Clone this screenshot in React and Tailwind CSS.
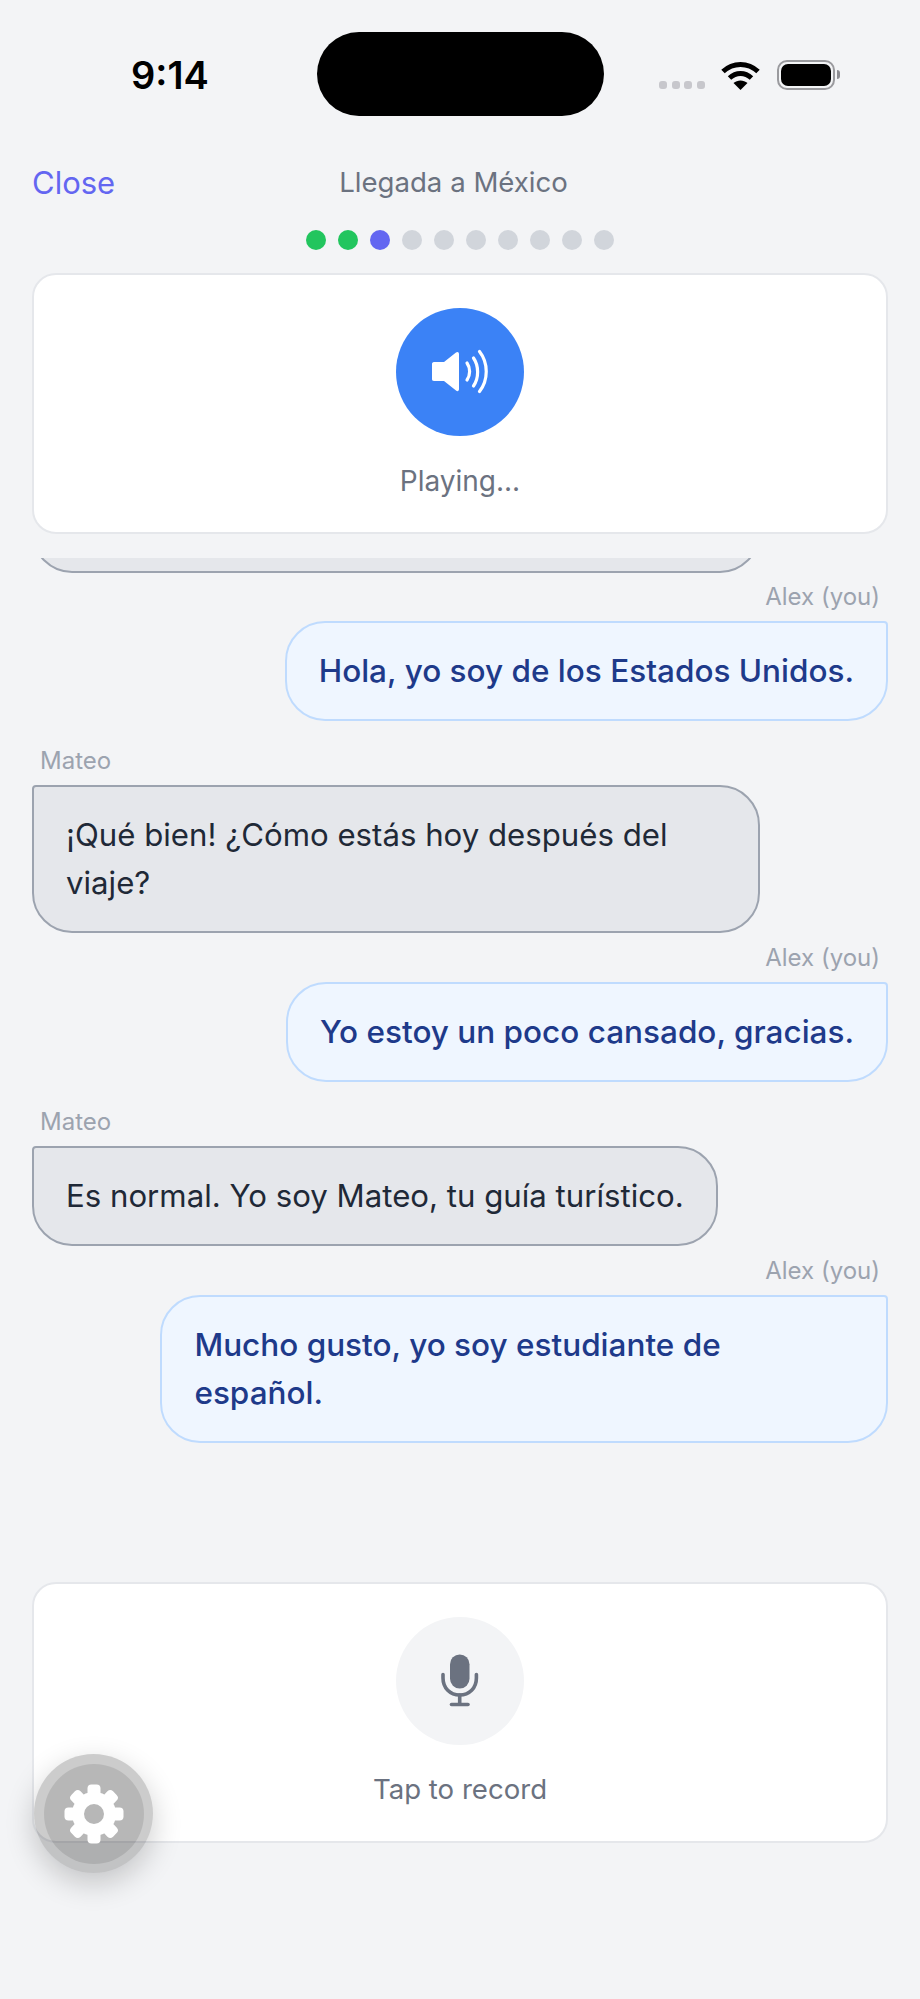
const dots = ["bg-[#22c55e]", "bg-[#22c55e]", "bg-[#6366f1]", "bg-[#d1d5db]", "bg-[#d1d5db]", "bg-[#d1d5db]", "bg-[#d1d5db]", "bg-[#d1d5db]", "bg-[#d1d5db]", "bg-[#d1d5db]"];

const messages = [
  { mine: true, text: "Hola, yo soy de los Estados Unidos.", gap: "mt-2" },
  { mine: false, text: "¡Qué bien! ¿Cómo estás hoy después del viaje?", gap: "mt-6" },
  { mine: true, text: "Yo estoy un poco cansado, gracias.", gap: "mt-[9px]" },
  { mine: false, text: "Es normal. Yo soy Mateo, tu guía turístico.", gap: "mt-6" },
  { mine: true, text: "Mucho gusto, yo soy estudiante de español.", gap: "mt-[9px]" },
];

const WifiIcon = () => (
  <svg width="39" height="29" viewBox="0 0 39 29" fill="none" stroke="#000" strokeWidth="5">
    <path d="M2 10.5C12 1 27 1 37 10.5" />
    <path d="M8.5 17C15 11 24 11 30.5 17" />
    <path d="M19.5 29L12.5 22C16.5 18.6 22.5 18.6 26.5 22Z" fill="#000" stroke="none" />
  </svg>
);

const Battery = () => (
  <div className="flex items-center gap-[2px]">
    <div className="w-[58px] h-[30px] rounded-[10px] border-[2px] border-[#9a9a9e] p-[2px]">
      <div className="w-full h-full rounded-[7px] bg-black" />
    </div>
    <div className="w-[3px] h-[9px] rounded-r-full bg-[#8e8e93]" />
  </div>
);

const SpeakerIcon = () => (
  <svg width="128" height="128" viewBox="0 0 128 128" fill="none">
    <path d="M38 54H48L60 44.5C61.5 43.3 63 44 63 46V81C63 83 61.5 83.8 60 82.5L48 73H38C36.5 73 36 72 36 71V56C36 55 36.5 54 38 54Z" fill="#fff" />
    <g stroke="#fff" strokeWidth="3.2" strokeLinecap="round">
      <path d="M71 55C74.5 60 74.5 67 71 72" />
      <path d="M77.5 50C83 58 83 70 77.5 78" />
      <path d="M83.5 43.5C92.5 55 92.5 72 83.5 83.5" />
    </g>
  </svg>
);

const MicIcon = () => (
  <svg width="128" height="128" viewBox="0 0 128 128" fill="none">
    <rect x="54" y="37.5" width="19.5" height="34" rx="9.75" fill="#6b7280" />
    <g stroke="#6b7280" strokeWidth="3.6" strokeLinecap="round">
      <path d="M47 57.5V61C47 71 54 78 63.7 78C73.4 78 80.4 71 80.4 61V57.5" />
      <path d="M63.7 78V87" />
      <path d="M55.5 87.5H72" />
    </g>
  </svg>
);

const GearIcon = () => (
  <svg width="60" height="60" viewBox="-30 -30 60 60" fill="none">
    <circle r="16" stroke="#fff" strokeWidth="12" />
    {[0, 45, 90, 135, 180, 225, 270, 315].map((a) => (
      <rect key={a} x="-6.5" y="-29.5" width="13" height="12" rx="4" fill="#fff" transform={`rotate(${a})`} />
    ))}
  </svg>
);

const Bubble = ({ mine, children }) => (
  <div
    className={
      mine
        ? "max-w-[85%] rounded-[40px] rounded-tr-[4px] border-[2.5px] border-[#bfdbfe] bg-[#eff6ff] px-8 py-6 text-[31.5px] leading-[48px] font-medium text-[#1e3a8a]"
        : "max-w-[85%] rounded-[40px] rounded-tl-[4px] border-[2.5px] border-[#9ca3af] bg-[#e5e7eb] px-8 py-6 text-[31.2px] leading-[48px] text-[#1f2937]"
    }
  >
    {children}
  </div>
);

const Message = ({ mine, text, gap }) => (
  <div className={`flex flex-col ${gap} ${mine ? "items-end" : "items-start"}`}>
    <div className="mb-2 h-8 px-2 text-[24px] leading-8 text-[#9ca3af]">{mine ? "Alex (you)" : "Mateo"}</div>
    <Bubble mine={mine}>{text}</Bubble>
  </div>
);

export default function App() {
  return (
    <div className="relative w-[920px] h-[1999px] overflow-hidden bg-[#f3f4f6] font-['Inter',sans-serif]">
      {/* status bar */}
      <div className="flex items-center h-[84px] mt-8 pl-[131px]">
        <div className="w-[186px] mt-[2px] text-[38px] font-semibold leading-[44px] text-black">9:14</div>
        <div className="w-[287px] h-[84px] rounded-[42px] bg-black" />
        <div className="flex items-end ml-[55px] mt-[1px]">
          <div className="flex gap-[4.5px] mb-[1px]">
            <div className="w-2 h-2 rounded-[3px] bg-[#c7c7cc]" />
            <div className="w-2 h-2 rounded-[3px] bg-[#c7c7cc]" />
            <div className="w-2 h-2 rounded-[3px] bg-[#c7c7cc]" />
            <div className="w-2 h-2 rounded-[3px] bg-[#c7c7cc]" />
          </div>
          <div className="ml-4 mr-[17px]">
            <WifiIcon />
          </div>
          <Battery />
        </div>
      </div>

      {/* header */}
      <div className="flex items-center h-10 mt-[47px] px-8">
        <div className="text-[31px] text-[#6366f1]">Close</div>
        <div className="ml-[224px] text-[27.6px] text-[#6b7280]">Llegada a México</div>
      </div>

      <div className="flex justify-center gap-3 mt-[27px]">
        {dots.map((color, i) => (
          <div key={i} className={`w-5 h-5 rounded-full ${color}`} />
        ))}
      </div>

      {/* audio card */}
      <div className="flex flex-col items-center h-[261px] mx-8 mt-[23px] pt-[33px] rounded-[24px] border-2 border-[#e5e7eb] bg-white">
        <div className="w-32 h-32 rounded-full bg-[#3b82f6]">
          <SpeakerIcon />
        </div>
        <div className="mt-[29px] text-[28px] leading-8 text-[#6b7280]">Playing...</div>
      </div>

      {/* chat */}
      <div className="h-[1000px] mt-6 px-8 overflow-hidden">
        <div className="flex items-end h-[15px] overflow-hidden">
          <div className="w-[728px] h-[100px] shrink-0 rounded-[40px] rounded-tl-[4px] border-[2.5px] border-[#9ca3af] bg-[#e5e7eb]" />
        </div>
        {messages.map((m, i) => (
          <Message key={i} {...m} />
        ))}
      </div>

      {/* record card */}
      <div className="flex flex-col items-center h-[261px] mx-8 mt-6 pt-[33px] rounded-[24px] border-2 border-[#e5e7eb] bg-white">
        <div className="w-32 h-32 rounded-full bg-[#f3f4f6]">
          <MicIcon />
        </div>
        <div className="mt-7 text-[27.6px] leading-8 text-[#6b7280]">Tap to record</div>
      </div>

      {/* settings button */}
      <div className="absolute left-[34px] top-[1754px] flex items-center justify-center w-[119px] h-[119px] rounded-full bg-black/20 shadow-[0_10px_30px_rgba(0,0,0,0.2)]">
        <div className="flex items-center justify-center w-[100px] h-[100px] rounded-full bg-black/10">
          <GearIcon />
        </div>
      </div>
    </div>
  );
}
